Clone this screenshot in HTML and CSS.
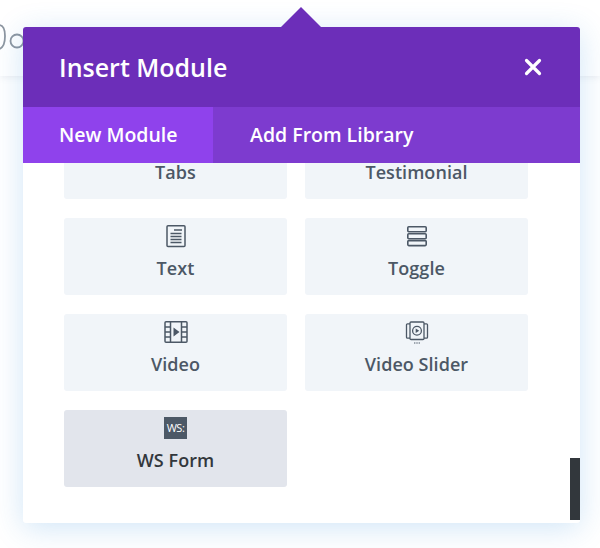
FILE: index.html
```html
<!DOCTYPE html>
<html lang="en">
<head>
<meta charset="utf-8">
<title>Insert Module</title>
<link rel="stylesheet" href="styles.css">
</head>
<body>
<div class="page-bar">
  <svg class="bar-icons" width="30" height="60" viewBox="0 0 30 60" fill="none" stroke="#8d96a0" stroke-width="1.800"><path d="M-1 26c4 0 6 4 6 11s-2 12-6 13"/><circle cx="17" cy="42" r="6.500"/></svg>
</div>
<section class="modal">
  <div class="arrow"></div>
  <header class="modal-head">
    <h1 class="modal-title">Insert Module</h1>
    <svg class="close" width="18" height="18" viewBox="0 0 18 18" stroke="#fff" stroke-width="3.200" stroke-linecap="round"><path d="M2.500 2.500l13 13M15.500 2.500l-13 13"/></svg>
  </header>
  <nav class="tabs">
    <div class="tab active">New Module</div>
    <div class="tab">Add From Library</div>
  </nav>
  <div class="modal-body">
    <div class="grid">
      <div class="tile"><span class="tile-label">Tabs</span></div>
      <div class="tile"><span class="tile-label">Testimonial</span></div>
      <div class="tile">
        <svg class="tile-icon" width="24" height="24" viewBox="0 0 24 24" fill="none" stroke="#4c5866" stroke-width="1.500"><rect x="3" y="1.800" width="18" height="20.600" rx="1"/><path d="M10 6h8M6.500 9.500h11M6.500 12.500h11M6.500 15.500h11M6.500 18.500h11" stroke-width="1.300"/></svg>
        <span class="tile-label">Text</span>
      </div>
      <div class="tile">
        <svg class="tile-icon" width="24" height="24" viewBox="0 0 24 24" fill="none" stroke="#4c5866" stroke-width="1.600"><rect x="2.800" y="2.800" width="18.400" height="5" rx="1"/><rect x="2.800" y="9.700" width="18.400" height="5" rx="1"/><rect x="2.800" y="16.600" width="18.400" height="5" rx="1"/></svg>
        <span class="tile-label">Toggle</span>
      </div>
      <div class="tile">
        <svg class="tile-icon" width="24" height="24" viewBox="0 0 24 24" fill="none" stroke="#4c5866" stroke-width="1.500"><rect x="1" y="1.800" width="22" height="20.400" rx="1"/><path d="M6.500 2v20M17.500 2v20M1 7h5.500M1 12h5.500M1 17h5.500M17.500 7H23M17.500 12H23M17.500 17H23"/><path d="M9.500 7.500l6 4.500-6 4.500z" fill="#4c5866" stroke="none"/></svg>
        <span class="tile-label">Video</span>
      </div>
      <div class="tile">
        <svg class="tile-icon" width="24" height="24" viewBox="0 0 24 24" fill="none" stroke="#4c5866" stroke-width="1.300"><path d="M5 3.800H2.500a1 1 0 0 0-1 1v12.400a1 1 0 0 0 1 1H5M19 3.800h2.500a1 1 0 0 1 1 1v12.400a1 1 0 0 1-1 1H19"/><rect x="5" y="2" width="14" height="17.500" rx="1"/><circle cx="12" cy="10.800" r="4.400"/><path d="M10.700 8.500l3.500 2.300-3.500 2.300z" fill="#4c5866" stroke="none"/><path d="M9 23h1.400M11.300 23h1.400M13.600 23H15" stroke-width="1.200"/></svg>
        <span class="tile-label">Video Slider</span>
      </div>
      <div class="tile selected">
        <div class="ws-badge">WS:</div>
        <span class="tile-label">WS Form</span>
      </div>
    </div>
    <div class="scrollbar"></div>
  </div>
</section>
</body>
</html>
```

FILE: styles.css
```css
* { box-sizing: border-box; }
html, body { margin: 0; height: 100%; }
body {
  width: 600px;
  height: 548px;
  overflow: hidden;
  position: relative;
  background: #fff;
  font-family: "Open Sans", "Liberation Sans", sans-serif;
}
.page-bar {
  height: 76px;
  background: #fff;
  box-shadow: 0 2px 6px rgba(120, 135, 160, 0.12);
  overflow: hidden;
}
.bar-icons { display: block; margin-top: -1px; }
.modal {
  position: absolute;
  left: 23px;
  top: 27px;
  width: 557px;
  height: 496px;
  background: #fff;
  border-radius: 3px;
  box-shadow: 0 5px 30px rgba(43, 135, 218, 0.22);
  display: flex;
  flex-direction: column;
}
.arrow {
  position: absolute;
  left: 258px;
  top: -20px;
  width: 0;
  height: 0;
  border-left: 20px solid transparent;
  border-right: 20px solid transparent;
  border-bottom: 20px solid #6c2eb9;
}
.modal-head {
  height: 80px;
  flex: none;
  background: #6c2eb9;
  border-radius: 3px 3px 0 0;
  padding: 0 38px 0 36px;
  display: flex;
  align-items: center;
  justify-content: space-between;
}
.modal-title {
  margin: 0;
  color: #fff;
  font-size: 25px;
  font-weight: 540;
  line-height: 80px;
  white-space: nowrap;
}
.close { display: block; margin-top: -1px; }
.tabs {
  height: 56px;
  flex: none;
  display: flex;
  background: #7d3bcf;
  position: relative;
  z-index: 1;
}
.tab {
  padding: 0 37px;
  color: #fff;
  font-size: 19.500px;
  font-weight: 540;
  line-height: 56px;
  white-space: nowrap;
}
.tab.active { width: 190px; padding: 0 0 0 36px; background: #8f42ec; }
.modal-body {
  flex: 1;
  min-height: 0;
  position: relative;
  overflow: hidden;
  padding: 0 52px 0 41px;
}
.grid {
  margin-top: -41px;
  display: grid;
  grid-template-columns: 223px 223px;
  column-gap: 18px;
  row-gap: 19px;
}
.tile {
  height: 77px;
  background: #f1f5f9;
  border-radius: 3px;
  display: flex;
  flex-direction: column;
  align-items: center;
  justify-content: flex-end;
  padding-bottom: 15px;
  gap: 8px;
}
.tile.selected { background: #e2e5ec; gap: 9px; }
.tile-icon { display: block; }
.tile-label {
  color: #4c5866;
  font-size: 18px;
  font-weight: 540;
  line-height: 24px;
  letter-spacing: 0.05px;
}
.selected .tile-label { color: #32373c; }
.ws-badge {
  width: 23px;
  height: 22px;
  background: #4c5866;
  color: #fff;
  font-size: 11px;
  line-height: 22px;
  text-align: center;
  letter-spacing: -0.5px;
}
.scrollbar {
  position: absolute;
  right: 0;
  top: 295px;
  width: 10px;
  height: 62px;
  background: #32373c;
}
```
